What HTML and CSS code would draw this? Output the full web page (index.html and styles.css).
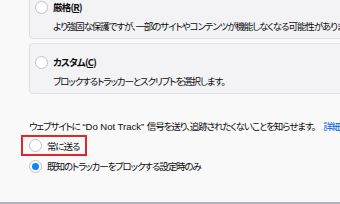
FILE: index.html
```html
<!DOCTYPE html>
<html lang="ja">
<head>
  <meta charset="UTF-8" />
  <meta name="viewport" content="width=device-width, initial-scale=1.0"/>
  <title>プライバシーとセキュリティ</title>
  <link rel="stylesheet" href="styles.css">
</head>
<body>

<div class="pane">
  <!-- blocking level cards -->
  <div class="card">
    <div class="option">
      <span class="radio"></span>
      <span class="option-title">厳格(<u>R</u>)</span>
    </div>
    <p class="desc">より強固な保護ですが、一部のサイトやコンテンツが機能しなくなる可能性があります。</p>
  </div>

  <div class="card">
    <div class="option">
      <span class="radio"></span>
      <span class="option-title">カスタム(<u>C</u>)</span>
    </div>
    <p class="desc">ブロックするトラッカーとスクリプトを選択します。</p>
  </div>

  <!-- Do Not Track -->
  <p class="dnt">ウェブサイトに<span class="latin"> “Do Not Track” </span>信号を送り、追跡されたくないことを知らせます。<a href="#">詳細情報</a></p>

  <div class="choices">
    <div class="choice marked">
      <span class="radio"></span>
      <span>常に送る</span>
    </div>
    <div class="choice">
      <span class="radio checked"></span>
      <span>既知のトラッカーをブロックする設定時のみ</span>
    </div>
  </div>
</div>

<div class="taskbar"></div>

</body>
</html>
```

FILE: styles.css
```css
body {
  font-family: "Noto Sans CJK JP", "Noto Sans", sans-serif;
  font-size: 9.5px;
  letter-spacing: -1.1px;
  font-feature-settings: "palt";
  color: #0c0c0d;
  background-color: #f9f9fa;
  margin: 0;
  padding: 0;
  width: 340px;
  height: 204px;
  overflow: hidden;
  display: flex;
  flex-direction: column;
}

.pane {
  flex: 1;
  padding-left: 29px;
  margin-top: -12px;
  white-space: nowrap;
}

.card {
  width: 340px;
  height: 51px;
  background-color: #f3f3f5;
  border: 1px solid #e0e0e5;
  border-radius: 4px;
  padding: 10px 0 0 5px;
  box-sizing: border-box;
  margin-bottom: 4px;
}

.option {
  display: flex;
  align-items: center;
  height: 16px;
}

.option-title {
  font-weight: bold;
  margin-left: 5px;
  letter-spacing: -0.8px;
}

.desc {
  margin: 3px 0 0 18px;
  line-height: 16px;
}

.radio {
  width: 13px;
  height: 13px;
  border: 1px solid #c2c2c6;
  border-radius: 50%;
  background-color: #fff;
  box-sizing: border-box;
  display: flex;
  align-items: center;
  justify-content: center;
  flex-shrink: 0;
}

.radio.checked::after {
  content: "";
  width: 7px;
  height: 7px;
  border-radius: 50%;
  background-color: #0a84ff;
}

.dnt {
  margin: 24px 0 0 0;
  line-height: 16px;
}

.dnt .latin {
  font-family: "Liberation Sans", sans-serif;
  letter-spacing: 0;
}

.dnt a {
  color: #0060df;
  text-decoration: none;
  margin-left: 8px;
}

.choice {
  display: flex;
  align-items: center;
  height: 20px;
}

.choice .radio {
  margin-right: 5px;
}

.choice.marked {
  display: inline-flex;
  border: 2px solid #e0252b;
  margin-left: -8px;
  padding: 0 6px 0 6px;
  height: 17px;
}

.taskbar {
  height: 2px;
  background-color: #b4b4b8;
}
```
